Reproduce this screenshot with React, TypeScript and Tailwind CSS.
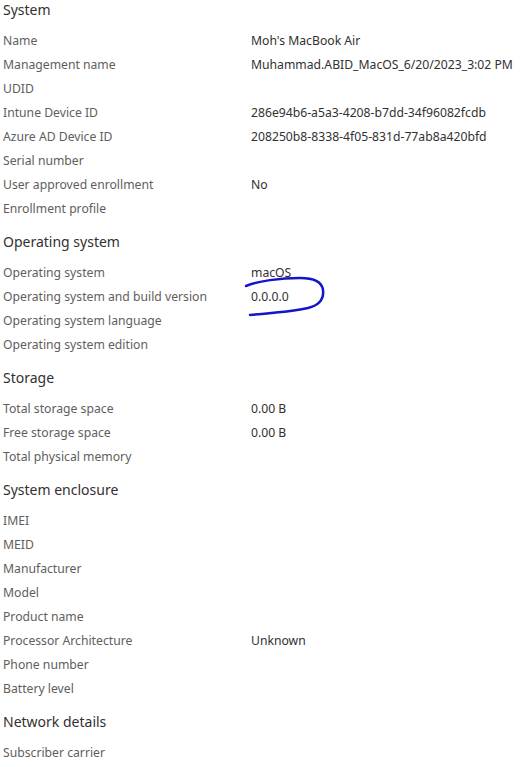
import React from "react";

type Row = [string, string?];

const sections: { title: string; rows: Row[] }[] = [
	{
		title: "System",
		rows: [
			["Name", "Moh's MacBook Air"],
			["Management name", "Muhammad.ABID_MacOS_6/20/2023_3:02 PM"],
			["UDID"],
			["Intune Device ID", "286e94b6-a5a3-4208-b7dd-34f96082fcdb"],
			["Azure AD Device ID", "208250b8-8338-4f05-831d-77ab8a420bfd"],
			["Serial number"],
			["User approved enrollment", "No"],
			["Enrollment profile"],
		],
	},
	{
		title: "Operating system",
		rows: [
			["Operating system", "macOS"],
			["Operating system and build version", "0.0.0.0"],
			["Operating system language"],
			["Operating system edition"],
		],
	},
	{
		title: "Storage",
		rows: [
			["Total storage space", "0.00 B"],
			["Free storage space", "0.00 B"],
			["Total physical memory"],
		],
	},
	{
		title: "System enclosure",
		rows: [
			["IMEI"],
			["MEID"],
			["Manufacturer"],
			["Model"],
			["Product name"],
			["Processor Architecture", "Unknown"],
			["Phone number"],
			["Battery level"],
		],
	},
	{
		title: "Network details",
		rows: [["Subscriber carrier"]],
	},
];

export default function App() {
	return (
		<div className="relative w-[529px] h-[767px] overflow-hidden bg-white pl-[3px] font-['Noto_Sans',sans-serif]">
			{sections.map((section, i) => (
				<section key={section.title} className={i === 0 ? "" : "mt-3"}>
					<h2 className="h-5 leading-5 text-[14px] text-[#323130] mb-2">
						{section.title}
					</h2>
					{section.rows.map(([label, value]) => (
						<div
							key={label}
							className="grid grid-cols-[248px_1fr] h-6 items-center pt-0.5 text-[12.2px]"
						>
							<span className="text-[#605e5c] whitespace-nowrap">{label}</span>
							<span className="text-[#323130] whitespace-nowrap">{value}</span>
						</div>
					))}
				</section>
			))}
			{/* hand-drawn marker around the build version */}
			<svg
				className="absolute left-0 top-0 pointer-events-none"
				width="529"
				height="767"
				viewBox="0 0 529 767"
				fill="none"
			>
				<path
					d="M246 286 C 258 281, 280 278, 300 278 C 315 278, 322 282, 323 290 C 324 298, 320 305, 308 308 C 290 312, 270 313, 250 315"
					stroke="#1414c8"
					strokeWidth="2.5"
					strokeLinecap="round"
				/>
			</svg>
		</div>
	);
}
